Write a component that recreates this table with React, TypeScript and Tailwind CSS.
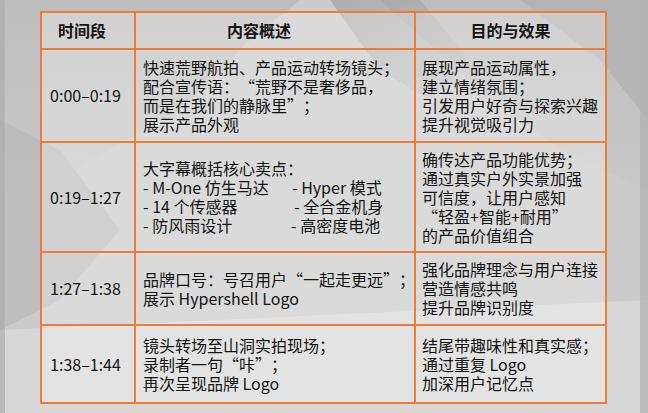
import React from "react";

const L = () => <span className="inline-block w-[1em] text-right">“</span>;
const R = () => <span className="inline-block w-[1em] text-left">”</span>;

const rows: { t: string; c: React.ReactNode; e: React.ReactNode[] }[] = [
  {
    t: "0:00–0:19",
    c: (
      <>
        <div>快速荒野航拍、产品运动转场镜头；</div>
        <div>
          配合宣传语：<L />荒野不是奢侈品，
        </div>
        <div>
          而是在我们的静脉里<R />；
        </div>
        <div>展示产品外观</div>
      </>
    ),
    e: ["展现产品运动属性，", "建立情绪氛围；", "引发用户好奇与探索兴趣", "提升视觉吸引力"],
  },
  {
    t: "0:19–1:27",
    c: (
      <>
        <div>大字幕概括核心卖点：</div>
        <div className="grid grid-cols-[149px_1fr]">
          <div>- M-One 仿生马达</div>
          <div>- Hyper 模式</div>
          <div>- 14 个传感器</div>
          <div className="pl-[2px]">- 全合金机身</div>
          <div>- 防风雨设计</div>
          <div className="-ml-[1px]">- 高密度电池</div>
        </div>
      </>
    ),
    e: [
      "确传达产品功能优势；",
      "通过真实户外实景加强",
      "可信度，让用户感知",
      <>
        <L />轻盈+智能+耐用<R />
      </>,
      "的产品价值组合",
    ],
  },
  {
    t: "1:27–1:38",
    c: (
      <>
        <div>
          品牌口号：号召用户<L />一起走更远<R />；
        </div>
        <div>展示 Hypershell Logo</div>
      </>
    ),
    e: ["强化品牌理念与用户连接", "营造情感共鸣", "提升品牌识别度"],
  },
  {
    t: "1:38–1:44",
    c: (
      <>
        <div>镜头转场至山洞实拍现场；</div>
        <div>
          录制者一句<L />咔<R />；
        </div>
        <div>再次呈现品牌 Logo</div>
      </>
    ),
    e: ["结尾带趣味性和真实感；", "通过重复 Logo", "加深用户记忆点"],
  },
];

const heights = ["h-[93px]", "h-[110px]", "h-[73px]", "h-[78px]"];

export default function App() {
  return (
    <div
      lang="zh-CN"
      className="relative w-[648px] h-[413px] overflow-hidden bg-[#cdcdcd] font-['Noto_Sans_CJK_SC','Noto_Sans',sans-serif] text-[#141414]"
    >
      <svg className="absolute inset-0" width="648" height="413" viewBox="0 0 648 413">
        <defs>
          <linearGradient id="g1" x1="0" y1="0" x2="0" y2="1">
            <stop offset="0" stopColor="#bdbdbd" />
            <stop offset="1" stopColor="#d6d6d6" />
          </linearGradient>
          <linearGradient id="g2" x1="0" y1="0" x2="1" y2="1">
            <stop offset="0" stopColor="#8f8f8f" />
            <stop offset="1" stopColor="#c4c4c4" />
          </linearGradient>
        </defs>
        <rect width="648" height="413" fill="url(#g1)" />
        <polygon points="300,0 380,0 470,80 560,150 648,190 648,413 0,413 0,230 90,160 180,110 250,40" fill="#cbcbcb" />
        <polygon points="330,0 420,0 470,60 430,100 380,70" fill="url(#g2)" opacity="0.5" />
        <polygon points="520,0 648,0 648,120 600,60" fill="#ababab" opacity="0.55" />
        <polygon points="0,120 60,150 120,230 60,300 0,330" fill="#b5b5b5" opacity="0.55" />
        <polygon points="0,330 648,300 648,413 0,413" fill="#d9d9d9" opacity="0.8" />
        <rect x="0" y="0" width="5" height="413" fill="#a8a8a8" opacity="0.6" />
        <rect x="640" y="0" width="8" height="413" fill="#b0b0b0" opacity="0.7" />
      </svg>

      <div className="relative pl-[40px] pt-[11px]">
        <table className="w-[567px] table-fixed border-collapse text-[16px] leading-[19px]">
          <colgroup>
            <col className="w-[94px]" />
            <col className="w-[280px]" />
            <col />
          </colgroup>
          <thead>
            <tr className="h-[37px]">
              <th className="border-2 border-[#ee7b36] bg-white/30 pr-[12px] text-center font-bold">时间段</th>
              <th className="border-2 border-[#ee7b36] bg-white/30 pr-[32px] text-center font-bold">内容概述</th>
              <th className="border-2 border-[#ee7b36] bg-white/30 text-center font-bold">目的与效果</th>
            </tr>
          </thead>
          <tbody>
            {rows.map((r, i) => (
              <tr key={i} className={heights[i]}>
                <td className="border-2 border-[#ee7b36] bg-white/30 pr-[5px] text-center align-middle">{r.t}</td>
                <td className="border-2 border-[#ee7b36] bg-white/30 pl-[7px] align-middle whitespace-nowrap">{r.c}</td>
                <td className="border-2 border-[#ee7b36] bg-white/30 pl-[6px] align-middle whitespace-nowrap">
                  {r.e.map((l, j) => (
                    <div key={j}>{l}</div>
                  ))}
                </td>
              </tr>
            ))}
          </tbody>
        </table>
      </div>
    </div>
  );
}
